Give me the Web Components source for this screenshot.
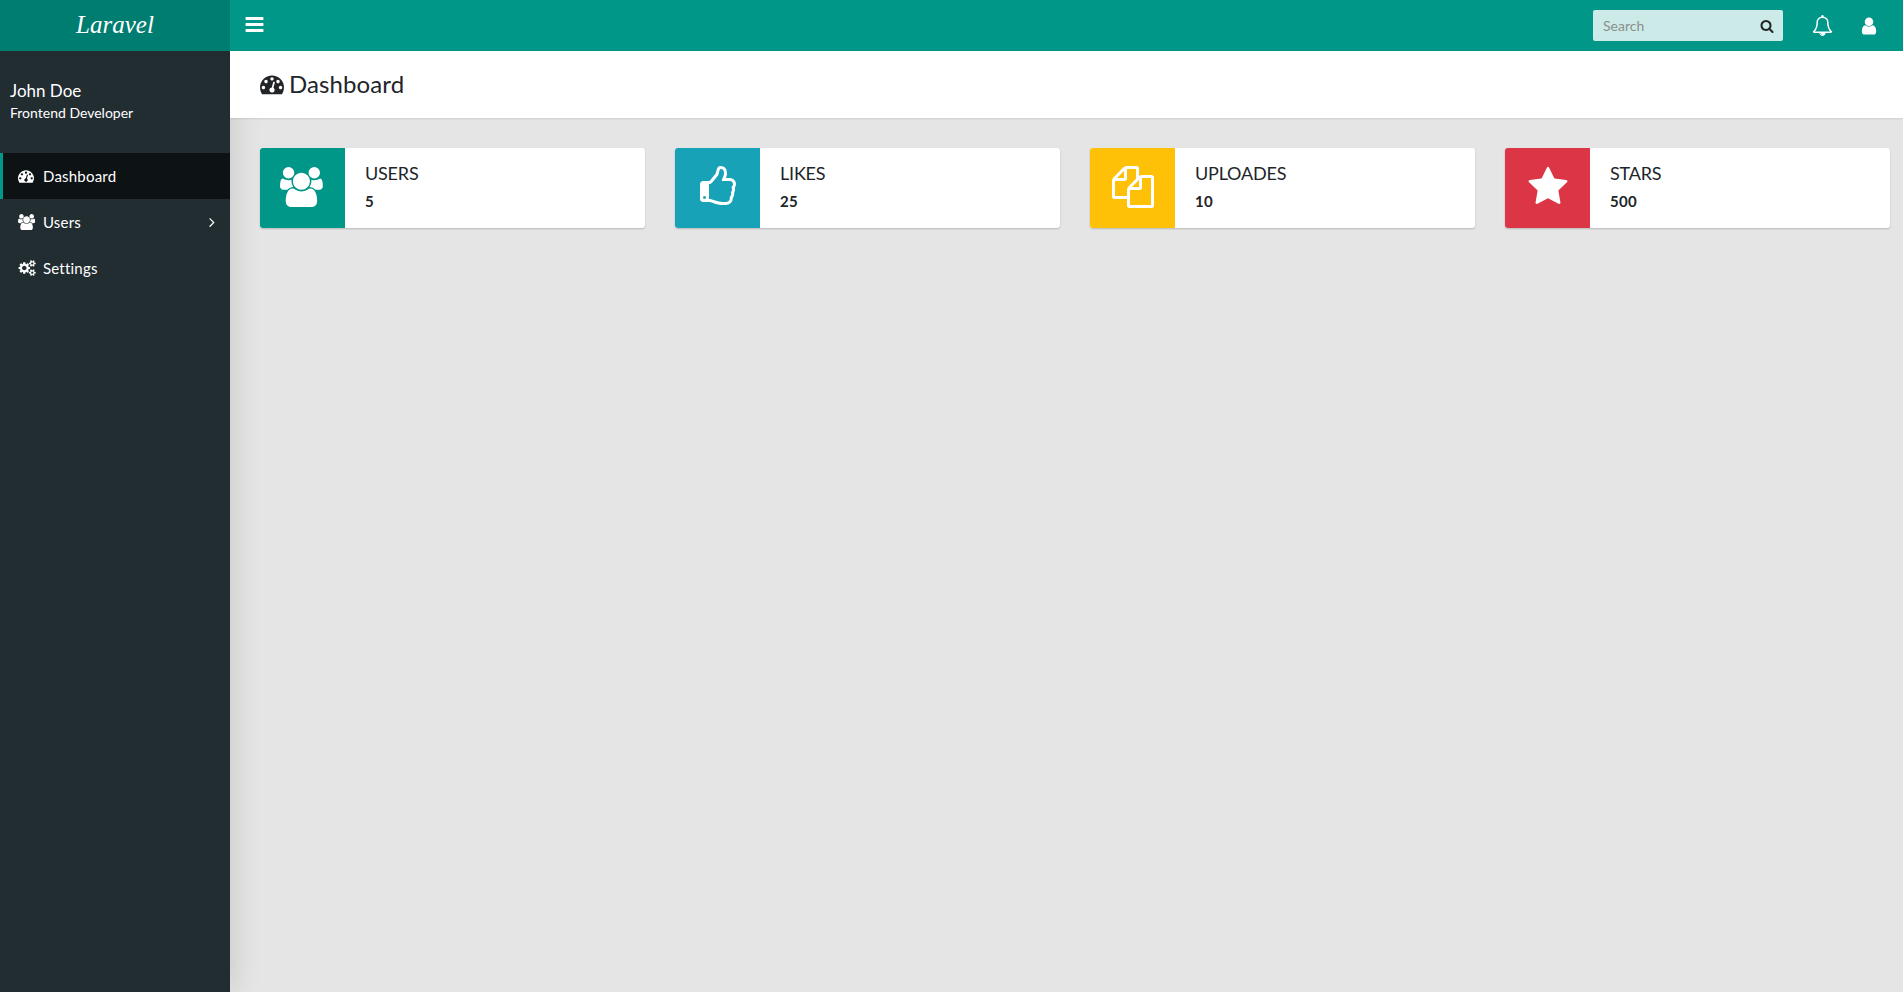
<!DOCTYPE html>
<html lang="en">
<head>
<meta charset="utf-8">
<title>Dashboard</title>
<style>
  html, body { margin: 0; height: 100%; }
  body { font-family: Lato, "Liberation Sans", sans-serif; color: #212529; background: #e5e5e5; overflow: hidden; }
</style>
</head>
<body>
<app-shell>
  <app-header slot="header"></app-header>
  <app-sidebar slot="sidebar">
    <side-item icon="dashboard" active>Dashboard</side-item>
    <side-item icon="users" arrow>Users</side-item>
    <side-item icon="cogs">Settings</side-item>
  </app-sidebar>
  <page-title icon="dashboard">Dashboard</page-title>
  <stat-row>
    <stat-card icon="users" color="#009688" size="40" label="USERS" value="5"></stat-card>
    <stat-card icon="thumbs" color="#17a2b8" size="42" label="LIKES" value="25"></stat-card>
    <stat-card icon="files" color="#ffc107" size="42" label="UPLOADES" value="10"></stat-card>
    <stat-card icon="star" color="#dc3545" size="42" label="STARS" value="500"></stat-card>
  </stat-row>
</app-shell>

<script>
// font awesome 4 glyphs, [viewBox width, path]
const ICONS = {
  bars: [1792, 'M1664 1344v128q0 26-19 45t-45 19h-1408q-26 0-45-19t-19-45v-128q0-26 19-45t45-19h1408q26 0 45 19t19 45zm0-512v128q0 26-19 45t-45 19h-1408q-26 0-45-19t-19-45v-128q0-26 19-45t45-19h1408q26 0 45 19t19 45zm0-512v128q0 26-19 45t-45 19h-1408q-26 0-45-19t-19-45v-128q0-26 19-45t45-19h1408q26 0 45 19t19 45z'],
  search: [1792, 'M1216 832q0-185-131.500-316.500t-316.500-131.500-316.500 131.500-131.500 316.500 131.500 316.500 316.500 131.500 316.500-131.500 131.500-316.500zm512 832q0 52-38 90t-90 38q-54 0-90-38l-343-342q-179 124-399 124-143 0-273.500-55.500t-225-150-150-225-55.500-273.500 55.500-273.500 150-225 225-150 273.500-55.500 273.500 55.500 225 150 150 225 55.500 273.500q0 220-124 399l343 343q37 37 37 90z'],
  bell: [1792, 'M912 1696q0-16-16-16-59 0-101.500-42.500t-42.500-101.500q0-16-16-16t-16 16q0 73 51.500 124.500t124.500 51.500q16 0 16-16zm-666-288h1300q-266-300-266-832 0-51-24-105t-69-103-121.500-80.500-169.500-31.500-169.500 31.500-121.500 80.500-69 103-24 105q0 532-266 832zm1482 0q0 52-38 90t-90 38h-448q0 106-75 181t-181 75-181-75-75-181h-448q-52 0-90-38t-38-90q50-42 91-88t85-119.500 74.500-158.500 50-206 19.500-260q0-152 117-282.500t307-158.500q-8-19-8-39 0-40 28-68t68-28 68 28 28 68q0 20-8 39 190 28 307 158.500t117 282.500q0 139 19.500 260t50 206 74.500 158.500 85 119.500 91 88z'],
  user: [1792, 'M1536 1399q0 109-62.500 187t-150.500 78h-854q-88 0-150.500-78t-62.500-187q0-85 8.500-160.500t31.500-152 58.500-131 94-89 134.500-34.500q131 128 313 128t313-128q76 0 134.500 34.500t94 89 58.500 131 31.500 152 8.500 160.500zm-256-887q0 159-112.500 271.500t-271.500 112.500-271.500-112.500-112.500-271.500 112.500-271.500 271.500-112.500 271.500 112.500 112.500 271.500z'],
  dashboard: [1792, 'M384 1152q0-53-37.500-90.500t-90.500-37.500-90.500 37.500-37.500 90.500 37.500 90.500 90.500 37.500 90.500-37.500 37.500-90.500zm192-448q0-53-37.500-90.500t-90.500-37.500-90.500 37.500-37.500 90.500 37.500 90.500 90.500 37.500 90.500-37.500 37.500-90.500zm428 481l101-382q6-26-7.500-48.500t-38.500-29.500-48 6.500-30 39.500l-101 382q-60 5-107 43.500t-63 98.500q-20 77 20 146t117 89 146-20 89-117q16-60-6-117t-72-91zm660-33q0-53-37.500-90.500t-90.500-37.500-90.500 37.500-37.500 90.500 37.500 90.500 90.500 37.500 90.500-37.500 37.500-90.500zm-640-640q0-53-37.500-90.500t-90.500-37.500-90.500 37.500-37.500 90.500 37.500 90.500 90.500 37.500 90.500-37.500 37.500-90.500zm448 192q0-53-37.500-90.500t-90.500-37.500-90.500 37.500-37.500 90.500 37.500 90.500 90.500 37.500 90.500-37.500 37.500-90.500zm320 448q0 261-141 483-19 29-54 29h-1402q-35 0-54-29-141-221-141-483 0-182 71-348t191-286 286-191 348-71 348 71 286 191 191 286 71 348z'],
  users: [2048, 'M593 896q-162 5-265 128h-134q-82 0-138-40.500t-56-118.500q0-353 124-353 6 0 43.500 21t97.500 42.500 119 21.500q67 0 133-23-5 37-5 66 0 139 81 256zm1071 637q0 120-73 189.500t-194 69.500h-874q-121 0-194-69.500t-73-189.500q0-53 3.500-103.500t14-109 26.500-108.500 43-97.500 62-81 85.500-53.500 111.500-20q10 0 43 21.500t73 48 107 48 135 21.500 135-21.500 107-48 73-48 43-21.500q61 0 111.500 20t85.500 53.500 62 81 43 97.500 26.500 108.500 14 109 3.500 103.500zm-1024-1277q0 106-75 181t-181 75-181-75-75-181 75-181 181-75 181 75 75 181zm704 384q0 159-112.500 271.500t-271.500 112.500-271.500-112.500-112.500-271.500 112.500-271.500 271.500-112.500 271.500 112.500 112.500 271.500zm576 225q0 78-56 118.500t-138 40.500h-134q-103-123-265-128 81-117 81-256 0-29-5-66 66 23 133 23 59 0 119-21.500t97.500-42.500 43.500-21q124 0 124 353zm-128-609q0 106-75 181t-181 75-181-75-75-181 75-181 181-75 181 75 75 181z'],
  cogs: [2048, 'M960 896q0-106-75-181t-181-75-181 75-75 181 75 181 181 75 181-75 75-181zm768 512q0-52-38-90t-90-38-90 38-38 90q0 53 37.500 90.500t90.500 37.500 90.500-37.500 37.500-90.500zm0-1024q0-52-38-90t-90-38-90 38-38 90q0 53 37.500 90.500t90.500 37.500 90.500-37.500 37.500-90.500zm-384 421v185q0 10-7 19.500t-16 10.500l-155 24q-11 35-32 76 34 48 90 115 7 11 7 20 0 12-7 19-23 30-82.500 89.500t-78.500 59.500q-11 0-21-7l-115-90q-37 19-77 31-11 108-23 155-7 24-30 24h-186q-11 0-20-7.500t-10-17.500l-23-153q-34-10-75-31l-118 89q-7 7-20 7-11 0-21-8-144-133-144-160 0-9 7-19 10-14 41-53t47-61q-23-44-35-82l-152-24q-10-1-17-9.500t-7-19.500v-185q0-10 7-19.500t16-10.500l155-24q11-35 32-76-34-48-90-115-7-11-7-20 0-12 7-20 22-30 82-89t79-59q11 0 21 7l115 90q34-18 77-32 11-108 23-154 7-24 30-24h186q11 0 20 7.500t10 17.500l23 153q34 10 75 31l118-89q8-7 20-7 11 0 21 8 144 133 144 160 0 8-7 19-12 16-42 54t-45 60q23 48 34 82l152 23q10 2 17 10.500t7 19.500zm640 533v140q0 16-149 31-12 27-30 52 51 113 51 138 0 4-4 7-122 71-124 71-8 0-46-47t-52-68q-20 2-30 2t-30-2q-14 21-52 68t-46 47q-2 0-124-71-4-3-4-7 0-25 51-138-18-25-30-52-149-15-149-31v-140q0-16 149-31 13-29 30-52-51-113-51-138 0-4 4-7 4-2 35-20t59-34 30-16q8 0 46 46.500t52 67.500q20-2 30-2t30 2q51-71 92-112l6-2q4 0 124 70 4 3 4 7 0 25-51 138 17 23 30 52 149 15 149 31zm0-1024v140q0 16-149 31-12 27-30 52 51 113 51 138 0 4-4 7-122 71-124 71-8 0-46-47t-52-68q-20 2-30 2t-30-2q-14 21-52 68t-46 47q-2 0-124-71-4-3-4-7 0-25 51-138-18-25-30-52-149-15-149-31v-140q0-16 149-31 13-29 30-52-51-113-51-138 0-4 4-7 4-2 35-20t59-34 30-16q8 0 46 46.500t52 67.500q20-2 30-2t30 2q51-71 92-112l6-2q4 0 124 70 4 3 4 7 0 25-51 138 17 23 30 52 149 15 149 31z'],
  angle: [1792, 'M1171 960q0 13-10 23l-466 466q-10 10-23 10t-23-10l-50-50q-10-10-10-23t10-23l393-393-393-393q-10-10-10-23t10-23l50-50q10-10 23-10t23 10l466 466q10 10 10 23z'],
  thumbs: [1792, 'M384 1344q0-26-19-45t-45-19-45 19-19 45 19 45 45 19 45-19 19-45zm1152-576q0-51-39-89.500t-89-38.500h-352q0-58 48-159.500t48-160.500q0-98-32-145t-128-47q-26 26-38 85t-30.500 125.500-59.500 109.500q-22 23-77 91-4 5-23 30t-31.500 41-34.500 42.500-40 44-38.500 35.500-40 27-35.500 9h-32v640h32q13 0 31.500 3t33 6.500 38 11 35 11.500 35.500 12.500 29 10.500q211 73 342 73h121q192 0 192-167 0-26-5-56 30-16 47.500-52.500t17.500-73.500-18-69q53-50 53-119 0-25-10-55.500t-25-47.500q32-1 53.500-47t21.500-81zm128-1q0 89-49 163 9 33 9 69 0 77-38 144 3 21 3 43 0 101-60 178 1 139-85 219.500t-227 80.500h-129q-96 0-189.500-22.500t-216.500-65.500q-116-40-138-40h-288q-53 0-90.500-37.500t-37.500-90.500v-640q0-53 37.500-90.500t90.500-37.500h274q36-24 137-155 58-75 107-128 24-25 35.500-85.500t30.500-126.500 62-108q39-37 90-37 84 0 151 32.500t102 101.500 35 186q0 93-48 192h176q104 0 180 76t76 179z'],
  files: [1792, 'M1696 384q40 0 68 28t28 68v1216q0 40-28 68t-68 28h-960q-40 0-68-28t-28-68v-288h-544q-40 0-68-28t-28-68v-672q0-40 20-88t48-76l408-408q28-28 76-48t88-20h416q40 0 68 28t28 68v328q68-40 128-40h416zm-544 213l-299 299h299v-299zm-640-384l-299 299h299v-299zm196 647l316-316v-416h-384v416q0 40-28 68t-68 28h-416v640h512v-256q0-40 20-88t48-76zm956 804v-1152h-384v416q0 40-28 68t-68 28h-416v640h896z'],
  star: [1792, 'M1728 647q0 22-26 48l-363 354 86 500q1 7 1 20 0 21-10.500 35.500t-30.500 14.500q-19 0-40-12l-449-236-449 236q-22 12-40 12-21 0-31.500-14.500t-10.500-35.500q0-6 2-20l86-500-364-354q-25-27-25-48 0-37 56-46l502-73 225-455q19-41 49-41t49 41l225 455 502 73q56 9 56 46z']
};

class FaIcon extends HTMLElement {
  connectedCallback() {
    const [w, d] = ICONS[this.getAttribute('name')];
    const size = +this.getAttribute('size') || 16;
    this.attachShadow({ mode: 'open' }).innerHTML = `
      <style>
        :host { display: inline-flex; flex: none; line-height: 0; }
        svg { fill: currentColor; display: block; }
      </style>
      <svg viewBox="0 0 ${w} 1792" width="${size * w / 1792}" height="${size}"><path d="${d}"/></svg>`;
  }
}

class AppShell extends HTMLElement {
  constructor() {
    super();
    this.attachShadow({ mode: 'open' }).innerHTML = `
      <style>
        :host { display: grid; grid-template: 51px 1fr / 230px 1fr; height: 992px; background: #e5e5e5; }
        ::slotted([slot=header]) { grid-column: 1 / 3; position: relative; z-index: 2; }
        main { min-width: 0; }
      </style>
      <slot name="header"></slot>
      <slot name="sidebar"></slot>
      <main><slot></slot></main>`;
  }
}

class AppHeader extends HTMLElement {
  constructor() {
    super();
    this.attachShadow({ mode: 'open' }).innerHTML = `
      <style>
        :host { display: flex; align-items: center; background: #009688; color: #fff; }
        .logo {
          width: 230px; height: 100%; display: flex; align-items: center; justify-content: center;
          background: #007d71; font: italic 25px "Liberation Serif", serif; padding-bottom: 2px; box-sizing: border-box;
        }
        .toggle { margin-left: 14px; margin-top: -3px; }
        .search {
          margin-left: auto; width: 190px; height: 31px; box-sizing: border-box; padding: 0 9px 0 10px;
          display: flex; align-items: center; background: rgba(255,255,255,.8); border-radius: 2px; color: #212529;
        }
        input {
          flex: 1; min-width: 0; border: 0; outline: 0; padding: 0; background: none;
          font: 14px Lato, sans-serif; color: #212529;
        }
        input::placeholder { color: #8a8f8e; opacity: 1; }
        .bell { margin-left: 29px; }
        .user { margin-left: 26px; margin-right: 24px; }
      </style>
      <div class="logo">Laravel</div>
      <fa-icon class="toggle" name="bars" size="21"></fa-icon>
      <div class="search"><input placeholder="Search"><fa-icon name="search" size="14"></fa-icon></div>
      <fa-icon class="bell" name="bell" size="21"></fa-icon>
      <fa-icon class="user" name="user" size="20"></fa-icon>`;
  }
}

class AppSidebar extends HTMLElement {
  constructor() {
    super();
    this.attachShadow({ mode: 'open' }).innerHTML = `
      <style>
        :host {
          display: block; position: relative; z-index: 1; background: #222d32; color: #fff;
          box-shadow: 0 0 30px rgba(0,0,0,.15);
        }
        .me { padding: 29px 10px 0; height: 102px; box-sizing: border-box; }
        .name { font-size: 17px; line-height: 22px; }
        .role { font-size: 14px; line-height: 17px; margin-top: 2px; }
      </style>
      <div class="me">
        <div class="name">John Doe</div>
        <div class="role">Frontend Developer</div>
      </div>
      <slot></slot>`;
  }
}

class SideItem extends HTMLElement {
  connectedCallback() {
    const arrow = this.hasAttribute('arrow')
      ? '<fa-icon class="arrow" name="angle" size="16"></fa-icon>' : '';
    this.attachShadow({ mode: 'open' }).innerHTML = `
      <style>
        :host {
          display: flex; align-items: center; height: 46px; box-sizing: border-box;
          padding: 0 10px 0 15px; border-left: 3px solid transparent; font-size: 15px; letter-spacing: .2px; color: #fff;
        }
        :host([active]) { background: #0d1214; border-left-color: #009688; }
        .icon { width: 25px; display: flex; align-items: center; }
        .arrow { margin-left: auto; }
      </style>
      <span class="icon"><fa-icon name="${this.getAttribute('icon')}" size="16"></fa-icon></span>
      <slot></slot>${arrow}`;
  }
}

class PageTitle extends HTMLElement {
  connectedCallback() {
    this.attachShadow({ mode: 'open' }).innerHTML = `
      <style>
        :host {
          display: flex; align-items: center; gap: 5px; height: 67px; box-sizing: border-box; padding: 0 30px 2px;
          position: relative; z-index: 2; letter-spacing: .1px;
          background: #fff; box-shadow: 0 1px 2px rgba(0,0,0,.1); font-size: 24px; color: #212529;
        }
      </style>
      <fa-icon name="${this.getAttribute('icon')}" size="24"></fa-icon>
      <slot></slot>`;
  }
}

class StatRow extends HTMLElement {
  constructor() {
    super();
    this.attachShadow({ mode: 'open' }).innerHTML = `
      <style>
        :host { display: grid; grid-template-columns: repeat(4, 1fr); gap: 30px; padding: 30px 13px 0 30px; }
      </style>
      <slot></slot>`;
  }
}

class StatCard extends HTMLElement {
  connectedCallback() {
    const a = n => this.getAttribute(n);
    this.attachShadow({ mode: 'open' }).innerHTML = `
      <style>
        :host {
          display: flex; height: 80px; background: #fff; border-radius: 3px; overflow: hidden;
          box-shadow: 0 1px 2px rgba(0,0,0,.2); color: #212529;
        }
        .icon {
          width: 85px; padding-bottom: 2px; box-sizing: border-box; display: flex; align-items: center; justify-content: center;
          color: #fff; background: ${a('color')};
        }
        .text { padding: 14px 20px 0; }
        .label { font-size: 18px; line-height: 22px; letter-spacing: -.2px; }
        .value { font-size: 15px; line-height: 18px; font-weight: 700; letter-spacing: .3px; margin-top: 8px; }
      </style>
      <div class="icon"><fa-icon name="${a('icon')}" size="${a('size')}"></fa-icon></div>
      <div class="text">
        <div class="label">${a('label')}</div>
        <div class="value">${a('value')}</div>
      </div>`;
  }
}

customElements.define('fa-icon', FaIcon);
customElements.define('app-shell', AppShell);
customElements.define('app-header', AppHeader);
customElements.define('app-sidebar', AppSidebar);
customElements.define('side-item', SideItem);
customElements.define('page-title', PageTitle);
customElements.define('stat-row', StatRow);
customElements.define('stat-card', StatCard);
</script>
</body>
</html>
